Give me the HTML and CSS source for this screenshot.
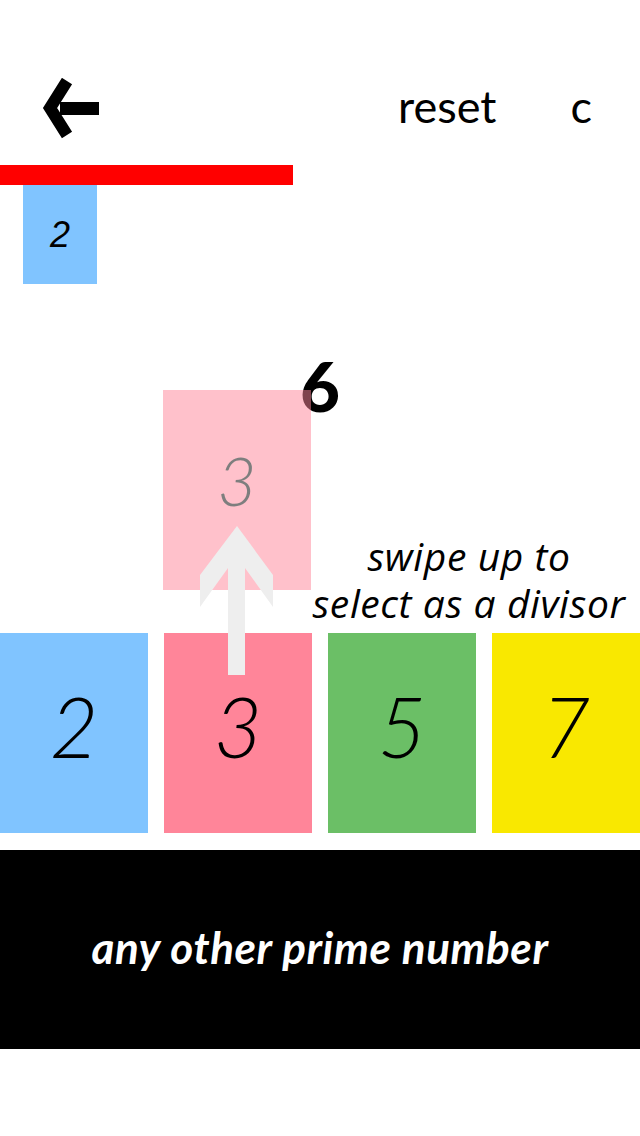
FILE: index.html
```html
<!DOCTYPE html>
<html>
<head>
<meta charset="utf-8">
<link rel="stylesheet" href="styles.css">
</head>
<body>
<div class="app">
  <header class="topbar">
    <svg class="back" width="60" height="62" viewBox="0 0 60 62">
      <polyline points="25,3 8,30 25,57" fill="none" stroke="#000" stroke-width="12" stroke-linejoin="miter" stroke-miterlimit="10"/>
      <rect x="18" y="24" width="39" height="13" fill="#000"/>
    </svg>
    <div class="actions">
      <span class="action">reset</span>
      <span class="action">c</span>
    </div>
  </header>
  <div class="progress"></div>
  <div class="divisors">
    <div class="divisor">2</div>
  </div>
  <section class="stage">
    <div class="target">6</div>
    <div class="ghost"><span>3</span></div>
    <svg class="swipe" width="78" height="152" viewBox="0 0 78 152">
      <polygon points="39,2 75,51 75,83 47,44 47,151 30,151 30,44 2,83 2,51" fill="#eeeeee"/>
    </svg>
    <div class="hint">
      <div class="hint-line">swipe up to</div>
      <div class="hint-line">select as a divisor</div>
    </div>
  </section>
  <div class="tiles">
    <div class="tile blue">2</div>
    <div class="tile pink">3</div>
    <div class="tile green">5</div>
    <div class="tile yellow">7</div>
  </div>
  <div class="other">any other prime number</div>
</div>
</body>
</html>
```
FILE: styles.css
```css
html, body {
  margin: 0;
  padding: 0;
  background: #fff;
}
.app {
  width: 640px;
  height: 1136px;
  overflow: hidden;
  font-family: "Lato", "Noto Sans", sans-serif;
  color: #000;
}
.topbar {
  display: flex;
  align-items: flex-start;
  height: 87px;
  padding-top: 78px;
}
.back {
  display: block;
  margin-left: 42px;
}
.actions {
  margin-left: auto;
  margin-right: 48px;
  display: flex;
  gap: 74px;
}
.action {
  font-size: 45px;
  line-height: 56px;
  font-weight: 400;
}
.progress {
  width: 293px;
  height: 20px;
  background: #ff0000;
}
.divisors {
  display: flex;
  padding-left: 23px;
}
.divisor {
  width: 74px;
  height: 99px;
  background: #80c4ff;
  display: flex;
  align-items: center;
  justify-content: center;
  font-family: "Liberation Sans", Arial, sans-serif;
  font-style: italic;
  font-size: 36px;
}
.stage {
  position: relative;
  height: 349px;
}
.target {
  padding-top: 68px;
  text-align: center;
  font-weight: 900;
  font-size: 69px;
  line-height: 68px;
}
.ghost {
  position: absolute;
  left: 163px;
  top: 106px;
  width: 148px;
  height: 200px;
  box-sizing: border-box;
  padding-bottom: 22px;
  background: #ff8599;
  opacity: 0.5;
  display: flex;
  align-items: center;
  justify-content: center;
  font-style: italic;
  font-weight: 300;
  font-size: 68px;
}
.swipe {
  position: absolute;
  left: 198px;
  top: 240px;
  z-index: 2;
}
.hint {
  position: absolute;
  left: 290px;
  top: 248px;
  width: 358px;
  text-align: center;
  font-family: "Open Sans", sans-serif;
  font-style: italic;
  font-size: 39px;
  letter-spacing: 0.6px;
}
.hint-line {
  height: 47px;
  line-height: 47px;
}
.tiles {
  display: flex;
  gap: 16px;
}
.tile {
  width: 148px;
  height: 200px;
  box-sizing: border-box;
  padding-bottom: 14px;
  display: flex;
  align-items: center;
  justify-content: center;
  font-style: italic;
  font-weight: 300;
  font-size: 84px;
  line-height: 186px;
}
.blue { background: #80c4ff; }
.pink { background: #ff8599; }
.green { background: #6bbf66; }
.yellow { background: #f9e800; }
.other {
  margin-top: 17px;
  height: 199px;
  box-sizing: border-box;
  padding-bottom: 6px;
  background: #000;
  color: #fff;
  display: flex;
  align-items: center;
  justify-content: center;
  font-weight: 700;
  font-style: italic;
  font-size: 44px;
  letter-spacing: 0.6px;
  line-height: 48px;
}
```
